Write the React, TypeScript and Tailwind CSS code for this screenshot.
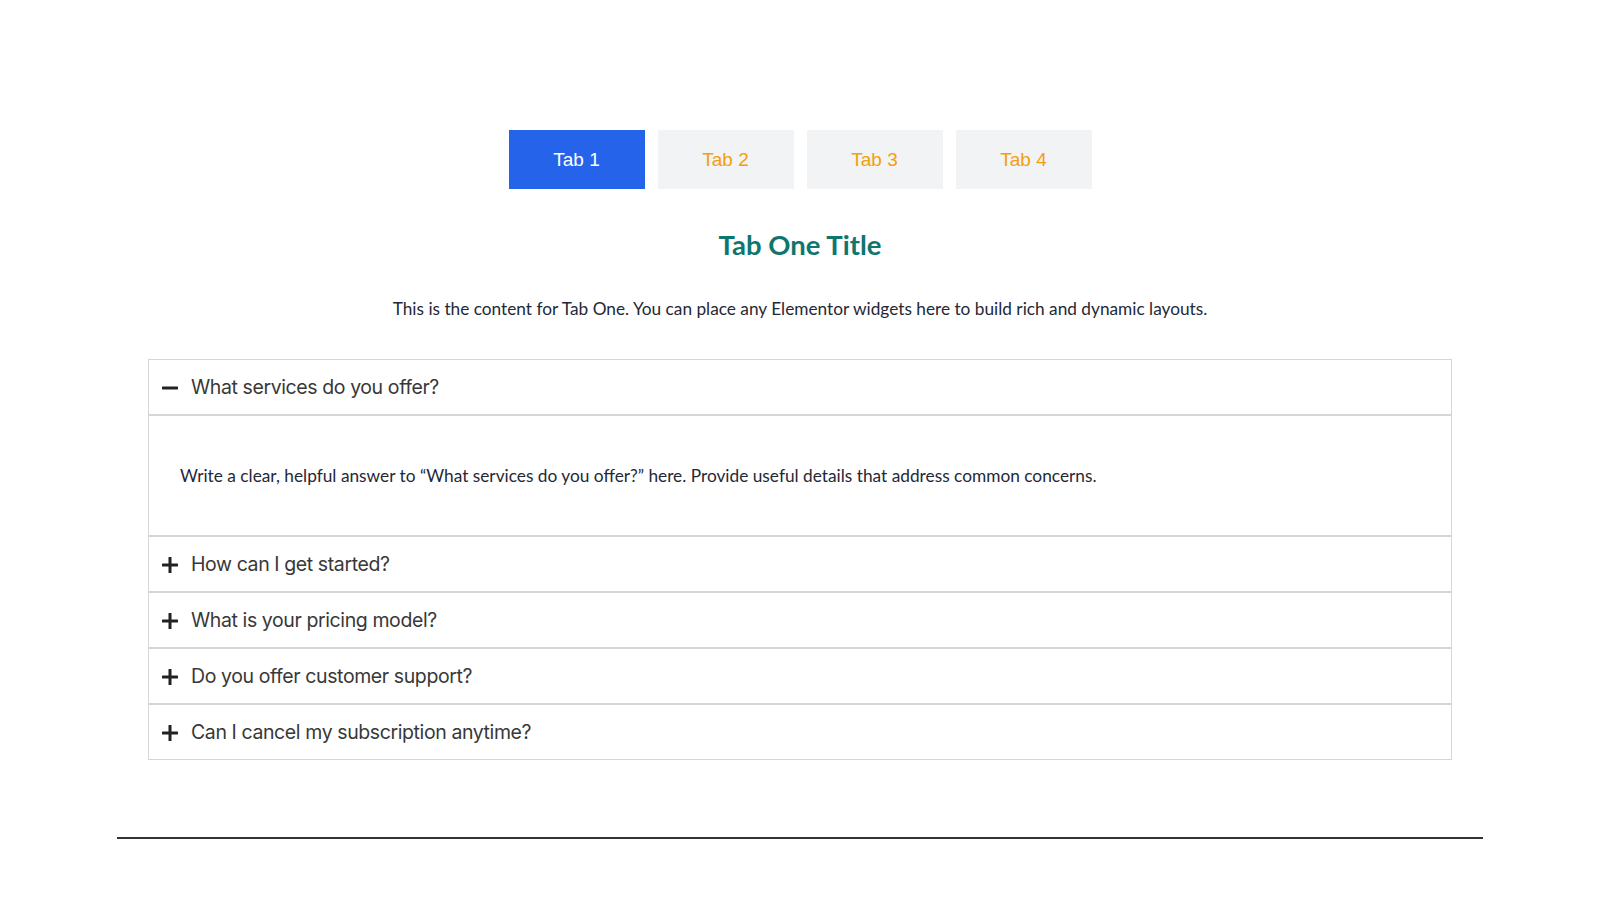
import React, { useState } from "react";

const faqs = [
  "What services do you offer?",
  "How can I get started?",
  "What is your pricing model?",
  "Do you offer customer support?",
  "Can I cancel my subscription anytime?",
];

function Minus() {
  return (
    <svg width="18" height="18" viewBox="0 0 18 18" className="shrink-0">
      <rect x="1" y="7.5" width="16" height="3" rx="0.5" fill="#222" />
    </svg>
  );
}
function Plus() {
  return (
    <svg width="18" height="18" viewBox="0 0 18 18" className="shrink-0">
      <rect x="1" y="7.5" width="16" height="3" rx="0.5" fill="#222" />
      <rect x="7.5" y="1" width="3" height="16" rx="0.5" fill="#222" />
    </svg>
  );
}

export default function App() {
  const [tab, setTab] = useState(0);
  const [open, setOpen] = useState(0);
  return (
    <div className="min-h-[900px] bg-white flex flex-col items-center pt-[130px]">
      <div className="flex gap-[13px]">
        {["Tab 1", "Tab 2", "Tab 3", "Tab 4"].map((t, i) => (
          <button
            key={t}
            onClick={() => setTab(i)}
            className={`w-[136px] h-[59px] pt-[2px] text-[19px] font-['Liberation_Sans',Arial,sans-serif] ${
              i === tab ? "bg-[#2563eb] text-white" : "bg-[#f2f3f5] text-[#f59e0b]"
            }`}
          >
            {t}
          </button>
        ))}
      </div>
      <h2 className="mt-[40px] text-[27.5px] leading-[32px] font-bold text-[#0f766e] font-['Lato','Noto_Sans',sans-serif]">
        Tab One Title
      </h2>
      <p className="mt-[37px] text-[17.25px] leading-[22px] text-[#1f2937] font-['Lato','Noto_Sans',sans-serif]">
        This is the content for Tab One. You can place any Elementor widgets here to build rich and dynamic layouts.
      </p>
      <div className="mt-[39px] w-[1304px] border border-[#d4d6da]">
        {faqs.map((q, i) => (
          <div key={q} className={i > 0 ? "border-t-2 border-[#d4d6da]" : ""}>
            <button
              onClick={() => setOpen(open === i ? -1 : i)}
              className="w-full h-[54px] flex items-center gap-[12px] pl-[12px] pt-[2px] text-left"
            >
              {open === i ? <Minus /> : <Plus />}
              <span className="text-[19.5px] text-[#383838] font-['Inter',sans-serif] tracking-[-0.4px]">{q}</span>
            </button>
            {open === i && (
              <div className="border-t-2 border-[#d4d6da] h-[121px] flex items-center pl-[31px]">
                <p className="text-[17.3px] text-[#1f2937] font-['Lato','Noto_Sans',sans-serif]">
                  Write a clear, helpful answer to “{q}” here. Provide useful details that address common concerns.
                </p>
              </div>
            )}
          </div>
        ))}
      </div>
      <div className="mt-[77px] w-[1366px] h-[2px] bg-[#333]" />
    </div>
  );
}
